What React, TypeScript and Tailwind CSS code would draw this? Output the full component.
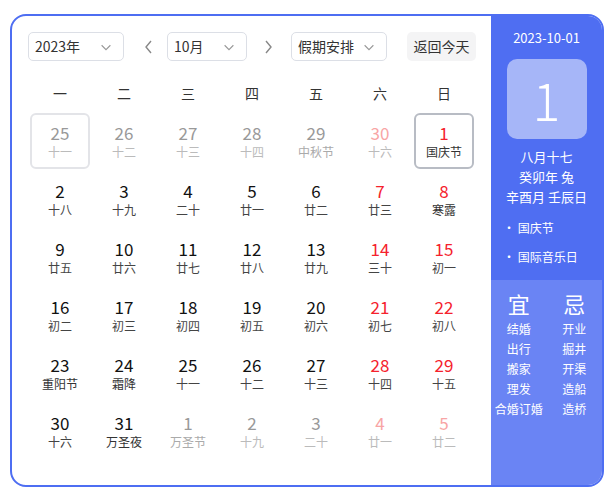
import React from "react";

type Cell = { d: string; l: string; out?: boolean; red?: boolean; hl?: boolean; box?: "gray" | "dark" };
const rows: Cell[][] = [
  [
    { d: "25", l: "十一", out: true, box: "gray" },
    { d: "26", l: "十二", out: true },
    { d: "27", l: "十三", out: true },
    { d: "28", l: "十四", out: true },
    { d: "29", l: "中秋节", out: true },
    { d: "30", l: "十六", out: true, red: true },
    { d: "1", l: "国庆节", red: true, hl: true, box: "dark" },
  ],
  [
    { d: "2", l: "十八" }, { d: "3", l: "十九" }, { d: "4", l: "二十" }, { d: "5", l: "廿一" },
    { d: "6", l: "廿二" }, { d: "7", l: "廿三", red: true }, { d: "8", l: "寒露", red: true, hl: true },
  ],
  [
    { d: "9", l: "廿五" }, { d: "10", l: "廿六" }, { d: "11", l: "廿七" }, { d: "12", l: "廿八" },
    { d: "13", l: "廿九" }, { d: "14", l: "三十", red: true }, { d: "15", l: "初一", red: true },
  ],
  [
    { d: "16", l: "初二" }, { d: "17", l: "初三" }, { d: "18", l: "初四" }, { d: "19", l: "初五" },
    { d: "20", l: "初六" }, { d: "21", l: "初七", red: true }, { d: "22", l: "初八", red: true },
  ],
  [
    { d: "23", l: "重阳节", hl: true }, { d: "24", l: "霜降", hl: true }, { d: "25", l: "十一" }, { d: "26", l: "十二" },
    { d: "27", l: "十三" }, { d: "28", l: "十四", red: true }, { d: "29", l: "十五", red: true },
  ],
  [
    { d: "30", l: "十六" }, { d: "31", l: "万圣夜", hl: true }, { d: "1", l: "万圣节", out: true }, { d: "2", l: "十九", out: true },
    { d: "3", l: "二十", out: true }, { d: "4", l: "廿一", out: true, red: true }, { d: "5", l: "廿二", out: true, red: true },
  ],
];

const Chev = () => (
  <svg width="14" height="14" viewBox="0 0 16 16" fill="none" stroke="#999" strokeWidth="1.3"><path d="M3 6l5 5 5-5" /></svg>
);

function Select({ w, label }: { w: string; label: string }) {
  return (
    <div className={`${w} h-[29px] border border-[#dcdfe6] rounded-[5px] flex items-center justify-between pl-[6px] pr-[10px] text-[14px] text-[#333]`}>
      <span>{label}</span>
      <Chev />
    </div>
  );
}

export default function App() {
  const font = { fontFamily: '"Microsoft YaHei", "Noto Sans CJK SC", sans-serif' };
  return (
    <div className="w-[615px] h-[501px] bg-white pt-[14px] pl-[10px]" style={font}>
      <div className="w-[594px] h-[473px] border-2 border-[#4e6ef2] rounded-[16px] flex overflow-hidden">
        <div className="w-[479px] pl-[16px] pt-[16px]">
          <div className="flex items-center h-[29px]">
            <Select w="w-[96px]" label="2023年" />
            <svg className="ml-[18px]" width="14" height="16" viewBox="0 0 14 16" fill="none" stroke="#888" strokeWidth="1.4"><path d="M9 2L4 8l5 6" /></svg>
            <div className="ml-[11px]"><Select w="w-[80px]" label="10月" /></div>
            <svg className="ml-[14px]" width="14" height="16" viewBox="0 0 14 16" fill="none" stroke="#888" strokeWidth="1.4"><path d="M5 2l5 6-5 6" /></svg>
            <div className="ml-[16px]"><Select w="w-[96px]" label="假期安排" /></div>
            <div className="ml-[20px] w-[69px] h-[29px] bg-[#f4f4f5] rounded-[5px] flex items-center justify-center text-[14px] text-[#333]">返回今天</div>
          </div>
          <div className="grid grid-cols-7 w-[448px] mt-[20px] h-[24px] items-center text-[14px] text-[#333]">
            {["一", "二", "三", "四", "五", "六", "日"].map((w) => (
              <div key={w} className="text-center">{w}</div>
            ))}
          </div>
          <div className="w-[448px] mt-[8px]">
            {rows.map((r, i) => (
              <div key={i} className="grid grid-cols-7 h-[58px]">
                {r.map((c, j) => {
                  const num = c.red ? (c.out ? "text-[#f8a5a5]" : "text-[#f5222d]") : c.out ? "text-[#999]" : "text-[#111]";
                  const lun = c.out ? (c.l === "中秋节" || c.l === "万圣节" ? "text-[#aaa]" : "text-[#bbb]") : c.hl ? "text-[#333]" : "text-[#444]";
                  const box =
                    c.box === "gray" ? "border-2 border-[#e3e4e8]" : c.box === "dark" ? "border-2 border-[#b8bcc4]" : "border-2 border-transparent";
                  return (
                    <div key={j} className="flex justify-center">
                      <div className={`w-[60px] h-[56px] rounded-[6px] ${box} flex flex-col items-center justify-center`}>
                        <div className={`text-[17px] leading-[22px] ${num}`}>{c.d}</div>
                        <div className={`text-[12px] leading-[16px] ${lun}`}>{c.l}</div>
                      </div>
                    </div>
                  );
                })}
              </div>
            ))}
          </div>
        </div>
        <div className="flex-1 flex flex-col text-white">
          <div className="bg-[#4f6ef2] h-[264px] flex flex-col items-center">
            <div className="mt-[13px] text-[13px] leading-[18px]">2023-10-01</div>
            <div className="mt-[12px] w-[80px] h-[80px] rounded-[10px] bg-[#a6b6f8] flex items-center justify-center text-[52px] font-light">1</div>
            <div className="mt-[8px] text-[13px] leading-[20px] text-center">八月十七<br />癸卯年 兔<br />辛酉月 壬辰日</div>
            <div className="self-start pl-[12px] mt-[6px] text-[12px] leading-[29px]">
              <div>• 国庆节</div>
              <div>• 国际音乐日</div>
            </div>
          </div>
          <div className="flex-1 bg-[#6a84f4] grid grid-cols-2 content-start pt-[8px] text-[12px]">
            <div className="flex flex-col items-center leading-[20px]">
              <div className="text-[22px] leading-[30px] mb-[1px]">宜</div>
              {["结婚", "出行", "搬家", "理发", "合婚订婚"].map((t) => <div key={t}>{t}</div>)}
            </div>
            <div className="flex flex-col items-center leading-[20px]">
              <div className="text-[22px] leading-[30px] mb-[1px]">忌</div>
              {["开业", "掘井", "开渠", "造船", "造桥"].map((t) => <div key={t}>{t}</div>)}
            </div>
          </div>
        </div>
      </div>
    </div>
  );
}
